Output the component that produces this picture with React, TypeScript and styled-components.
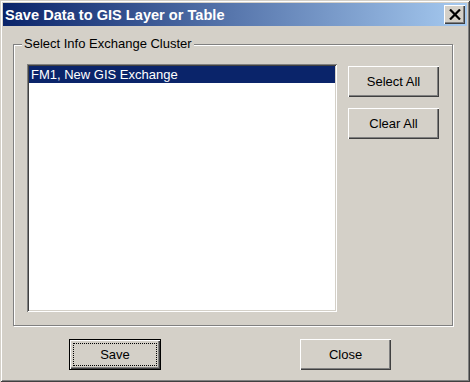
import styled, { createGlobalStyle } from "styled-components";

const GlobalStyle = createGlobalStyle`
    html, body {
        margin: 0;
        padding: 0;
        background: #d4d0c8;
    }
    * {
        box-sizing: border-box;
    }
`;

const Window = styled.div`
    width: 470px;
    height: 382px;
    display: flex;
    flex-direction: column;
    padding: 3px;
    background: #d4d0c8;
    font-family: "Liberation Sans", Arial, sans-serif;
    font-size: 13px;
    color: #000;
    box-shadow:
        inset 1px 1px 0 #d4d0c8,
        inset -1px -1px 0 #404040,
        inset 2px 2px 0 #fff,
        inset -2px -2px 0 #808080;
`;

const TitleBar = styled.div`
    height: 23px;
    display: flex;
    align-items: center;
    justify-content: space-between;
    padding: 0 2px 0 2px;
    background: linear-gradient(to right, #0a246a, #a6caf0);
`;

const Title = styled.span`
    color: #fff;
    font-weight: bold;
    font-size: 14.6px;
`;

const CloseBox = styled.div`
    width: 21px;
    height: 19px;
    display: flex;
    align-items: center;
    justify-content: center;
    background: #d4d0c8;
    box-shadow:
        inset 1px 1px 0 #fff,
        inset -1px -1px 0 #404040,
        inset -2px -2px 0 #808080;
`;

const Group = styled.div`
    position: relative;
    margin: 18px 0 0 10px;
    width: 440px;
    height: 282px;
    display: flex;
    gap: 11px;
    padding: 19px 13px 0 13px;
    border: 1px solid #808080;
    box-shadow: 1px 1px 0 #fff, inset 1px 1px 0 #fff;
`;

const GroupLabel = styled.span`
    position: absolute;
    top: -9px;
    left: 8px;
    padding: 0 2px;
    background: #d4d0c8;
    line-height: 16px;
`;

const ListBox = styled.div`
    width: 310px;
    height: 248px;
    padding: 2px;
    background: #fff;
    box-shadow:
        inset 1px 1px 0 #808080,
        inset -1px -1px 0 #fff,
        inset 2px 2px 0 #404040,
        inset -2px -2px 0 #d4d0c8;
`;

const ListItem = styled.div<{ selected?: boolean }>`
    height: 17px;
    line-height: 17px;
    padding-left: 2px;
    background: ${(props) => (props.selected ? "#0a246a" : "transparent")};
    color: ${(props) => (props.selected ? "#fff" : "#000")};
`;

const SideButtons = styled.div`
    display: flex;
    flex-direction: column;
    gap: 11px;
    padding-top: 2px;
`;

const Button = styled.button<{ isDefault?: boolean }>`
    width: ${(props) => (props.isDefault ? "92px" : "91px")};
    height: 31px;
    padding: 0;
    font-family: "Liberation Sans", Arial, sans-serif;
    font-size: 13px;
    color: #000;
    background: #d4d0c8;
    border: ${(props) => (props.isDefault ? "1px solid #000" : "none")};
    box-shadow:
        inset 1px 1px 0 #fff,
        inset -1px -1px 0 #404040,
        inset -2px -2px 0 #808080;
    position: relative;
    cursor: pointer;
`;

const FocusRing = styled.span`
    position: absolute;
    inset: 3px;
    border: 1px dotted #000;
`;

const BottomRow = styled.div`
    display: flex;
    gap: 139px;
    margin: 13px 0 0 66px;
`;

const App = () => {
    return (
        <>
            <GlobalStyle />
            <Window>
                <TitleBar>
                    <Title>Save Data to GIS Layer or Table</Title>
                    <CloseBox>
                        <svg width="12" height="11" viewBox="0 0 12 11">
                            <path d="M1 0.5 L11 10.5 M11 0.5 L1 10.5" stroke="#000" strokeWidth="2.2" />
                        </svg>
                    </CloseBox>
                </TitleBar>

                <Group>
                    <GroupLabel>Select Info Exchange Cluster</GroupLabel>
                    <ListBox>
                        <ListItem selected={true}>FM1, New GIS Exchange</ListItem>
                    </ListBox>
                    <SideButtons>
                        <Button>Select All</Button>
                        <Button>Clear All</Button>
                    </SideButtons>
                </Group>

                <BottomRow>
                    <Button isDefault={true}>
                        <FocusRing />
                        Save
                    </Button>
                    <Button>Close</Button>
                </BottomRow>
            </Window>
        </>
    );
};

export default App;
